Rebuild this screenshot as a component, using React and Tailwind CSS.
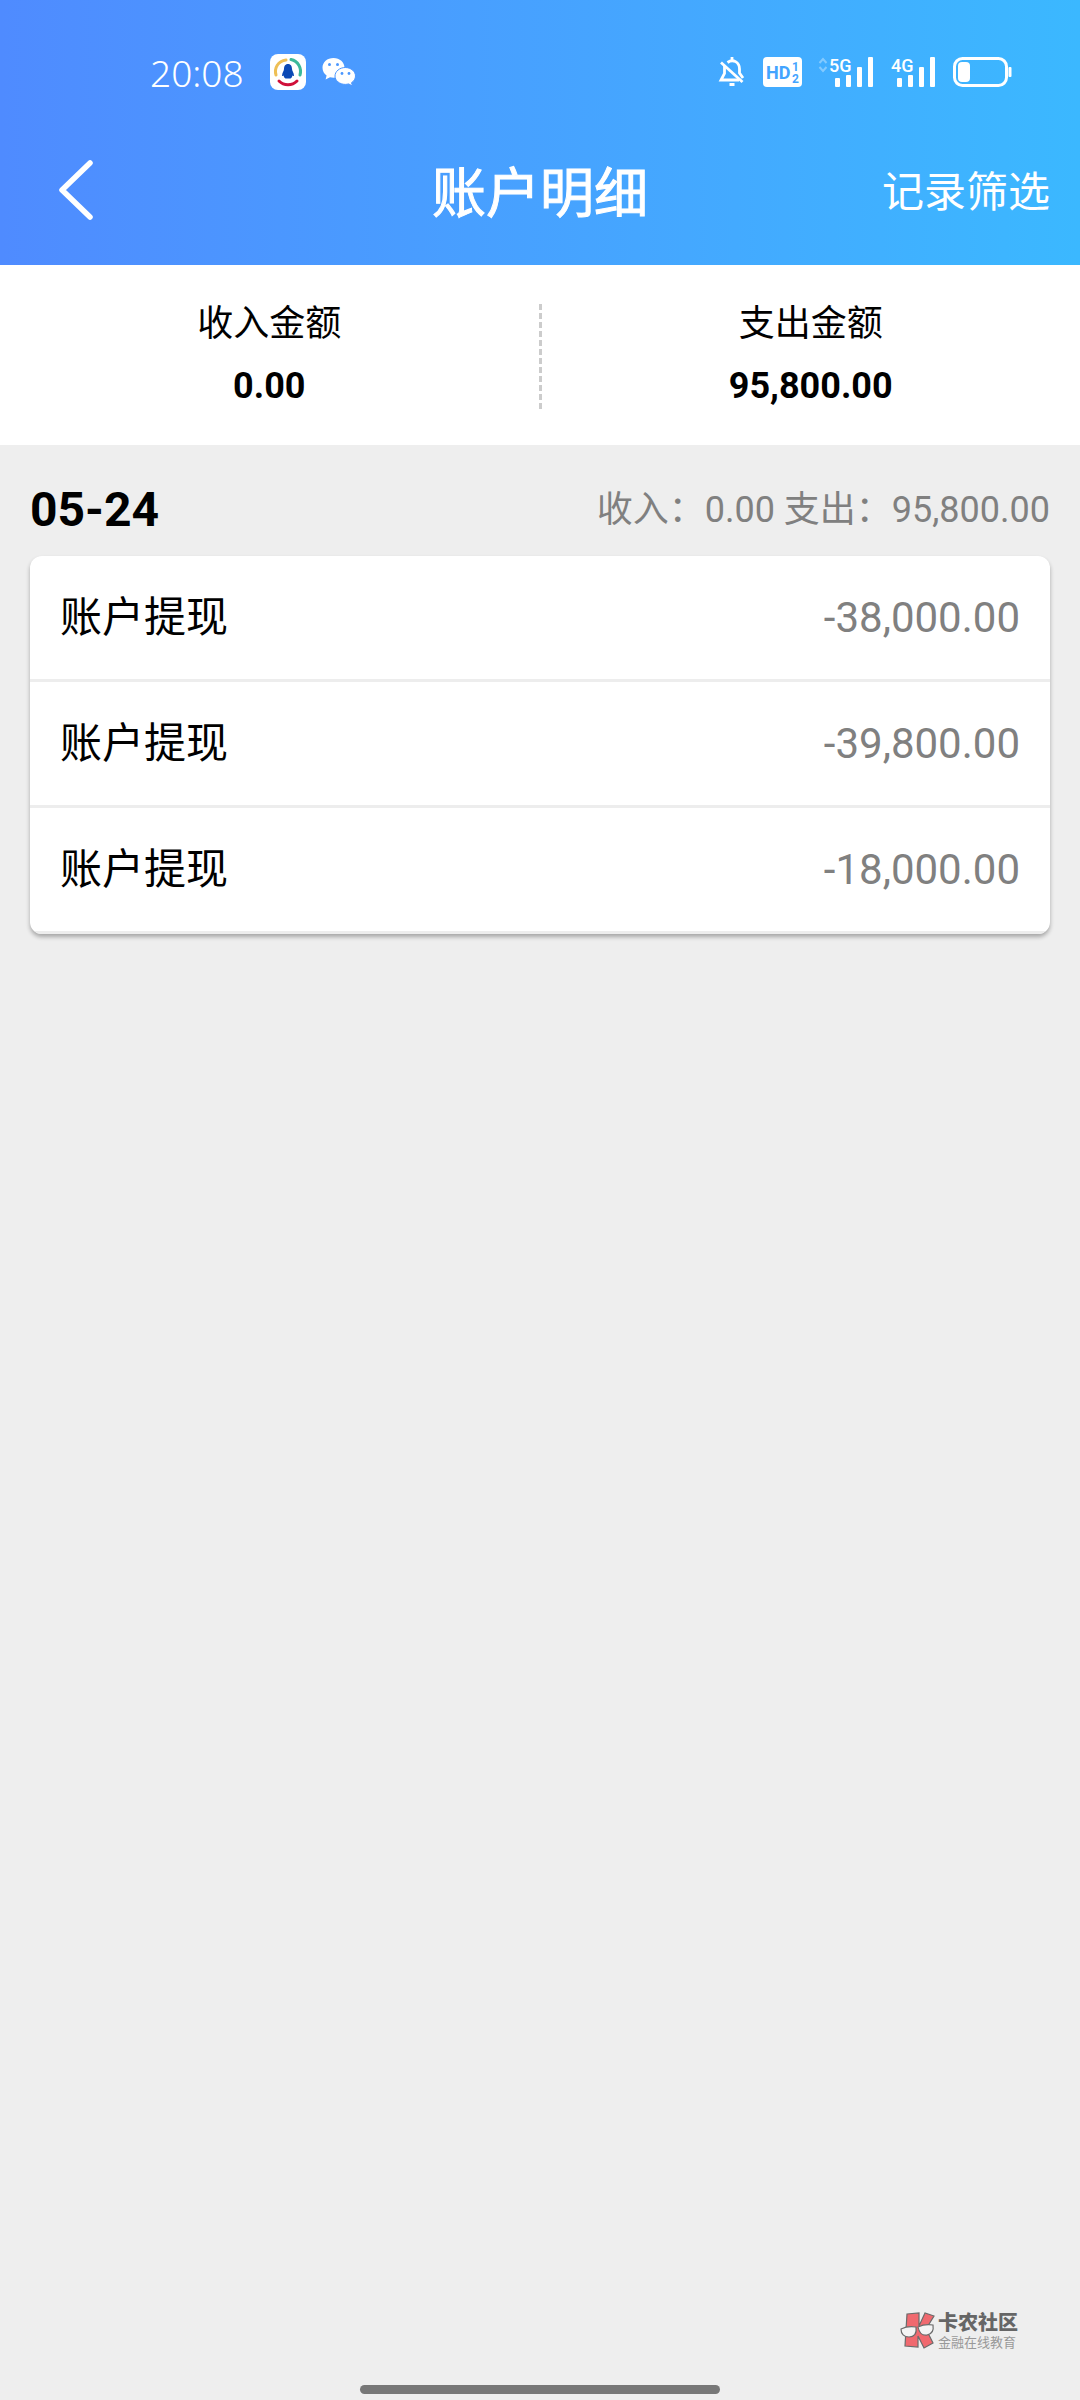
import React from "react";

/**DATA */
const summary = [
    { label: "收入金额", value: "0.00" },
    { label: "支出金额", value: "95,800.00" },
];

const records = [
    { id: 1, name: "账户提现", amount: "-38,000.00" },
    { id: 2, name: "账户提现", amount: "-39,800.00" },
    { id: 3, name: "账户提现", amount: "-18,000.00" },
];

/**STATUS BAR ICONS */
const QQMailIcon = () => (
    <svg width="36" height="36" viewBox="0 0 36 36">
        <rect width="36" height="36" rx="8" fill="#fff" />
        <g fill="none" strokeWidth="3" strokeLinecap="round">
            <path d="M6 21C4 14 8 7 16 6" stroke="#eebf55" />
            <path d="M21 5.500C28 7 32 14 30 21" stroke="#3cb99a" />
            <path d="M9 27C14 32 22 32 27 27" stroke="#d0103a" />
        </g>
        <path d="M18 10c-3 0-4 2.500-4 5 0 2-2 3.500-2 7 1 0 1.500-.5 1.500-.5.5 1.500 1 2.500 2 3h5c1-.5 1.500-1.500 2-3 0 0 .5.5 1.500.5 0-3.500-2-5-2-7 0-2.500-1-5-4-5z" fill="#0b49b5" />
    </svg>
);

const WeChatIcon = () => (
    <svg width="34" height="30" viewBox="0 0 34 30">
        <path fill="#fff" d="M11.500 1C5.200 1 .5 5.200.5 10.800c0 3.200 1.600 5.900 4.100 7.700L3.600 22.500l4.400-2.200c1.200.3 2.300.5 3.500.5 6.300 0 11-4.500 11-10S17.800 1 11.500 1z" />
        <path fill="#fff" stroke="#4b97ff" strokeWidth="1" d="M33.500 19c0-4.600-4.600-8.500-10.200-8.500S13 14.400 13 19s4.600 8.400 10.300 8.400c1.200 0 2.300-.2 3.300-.5l3.900 2.100-1-3.300c2.500-1.500 4-4 4-6.700z" />
        <g fill="#4b97ff">
            <circle cx="7.500" cy="7.500" r="1.500" />
            <circle cx="15.500" cy="7.500" r="1.500" />
            <circle cx="20" cy="16.500" r="1.400" />
            <circle cx="27" cy="16.500" r="1.400" />
        </g>
    </svg>
);

const MuteIcon = () => (
    <svg width="28" height="30" viewBox="0 0 28 30" fill="none" stroke="#fff" strokeWidth="2.800">
        <path d="M9.500 5.500C15 1.500 21.500 5 21.500 12v4l3.500 5" />
        <path d="M6.500 9v7.500L3 23h18" />
        <path d="M3 5.500l21.500 19.500" />
        <path d="M14 0v4" />
        <path d="M11.500 27.500h5" strokeWidth="3" />
    </svg>
);

const HDIcon = () => (
    <svg width="40" height="30" viewBox="0 0 40 30" fill="#43a4ff" fontFamily="Roboto, sans-serif" fontWeight="700">
        <rect width="39" height="30" rx="4" x="1" fill="#fff" />
        <text x="4" y="22" fontSize="18">HD</text>
        <text x="30" y="14" fontSize="12">1</text>
        <text x="30" y="26" fontSize="12">2</text>
    </svg>
);

const Signal = ({ label, arrows }) => (
    <svg width={arrows ? 56 : 46} height="40" viewBox={arrows ? "-10 -5 56 40" : "0 -5 46 40"} fill="#fff">
        {arrows && (
            <g fill="none" stroke="#fff" strokeOpacity="0.35" strokeWidth="2">
                <path d="M-8.500 6l3.500-4 3.500 4" />
                <path d="M-8.500 10l3.500 4 3.500-4" />
            </g>
        )}
        <text x="1" y="15" fontSize="18" fontFamily="Roboto, sans-serif" fontWeight="500">{label}</text>
        <rect x="7" y="21" width="5" height="9" rx="1" />
        <rect x="18" y="18" width="5" height="12" rx="1" />
        <rect x="29" y="10" width="5" height="20" rx="1" />
        <rect x="40" y="0" width="5" height="30" rx="1" />
    </svg>
);

const BatteryIcon = () => (
    <svg width="60" height="30" viewBox="0 0 60 30">
        <rect x="2.500" y="1.500" width="52" height="27" rx="8" fill="none" stroke="#fff" strokeWidth="3" />
        <rect x="6" y="5" width="12" height="20" rx="4" fill="#fff" />
        <rect x="56.500" y="10" width="3" height="10" rx="1" fill="#fff" />
    </svg>
);

const StatusBar = () => (
    <div className="flex h-36 items-center justify-between pl-[150px] pr-[68px] text-white">
        <div className="flex items-center">
            <span className="font-['Noto_Sans',sans-serif] text-[37px] font-light leading-none">20:08</span>
            <div className="ml-[26px] flex items-center gap-4">
                <QQMailIcon />
                <WeChatIcon />
            </div>
        </div>
        <div className="flex items-center gap-4">
            <MuteIcon />
            <HDIcon />
            <Signal label="5G" arrows />
            <Signal label="4G" />
            <BatteryIcon />
        </div>
    </div>
);

/**BRAND MARK AT THE BOTTOM */
const Brand = () => (
    <div className="flex items-center gap-0.5 self-end pr-[62px]">
        <svg width="36" height="38" viewBox="0 0 36 38" stroke="#6b6b6b" strokeWidth="1.200">
            <path d="M7 2l12-1v13l6-13 9 3-8 13 7 14-9 5-6-12v11L5 34z" fill="#f0696f" />
            <path d="M1 17c4-2 9-3 15-2 1 7-2 10-7 10s-8-3-8-8z" fill="#f4f4f4" />
            <path d="M18 15c4-2 9-3 15-2 1 6-1 9-6 10s-8-3-9-8z" fill="#f4f4f4" />
        </svg>
        <div className="flex flex-col">
            <span className="text-xl font-black leading-6 text-[#666]">卡农社区</span>
            <span className="text-[13px] leading-4 text-[#999]">金融在线教育</span>
        </div>
    </div>
);

const App = () => {
    return (
        <div className="flex min-h-screen flex-col bg-[#eee] font-[Roboto,'Noto_Sans_CJK_SC',sans-serif] text-black">
            <header className="bg-gradient-to-r from-[#4f8bff] to-[#3bb8ff]">
                <StatusBar />

                {/**NAVIGATION*/}
                <div className="grid h-[121px] grid-cols-3 items-start px-[30px] pt-4 text-white">
                    <button type="button" aria-label="返回" className="flex h-[60px] items-center pl-7">
                        <svg width="36" height="62" viewBox="0 0 36 62" fill="none" stroke="#fff" strokeWidth="5.500" strokeLinecap="round" strokeLinejoin="round">
                            <path d="M32 4L4 31l28 27" />
                        </svg>
                    </button>
                    <h1 className="text-center text-[54px] font-normal leading-[70px] [-webkit-text-stroke:1px_white]">账户明细</h1>
                    <button type="button" className="justify-self-end text-[42px] leading-[66px]">记录筛选</button>
                </div>
            </header>

            {/**SUMMARY*/}
            <section className="grid h-[180px] grid-cols-[1fr_3px_1fr] items-center bg-white">
                {summary.map((item, i) => (
                    <React.Fragment key={item.label}>
                        {i > 0 && (
                            <div className="h-[108px] bg-[repeating-linear-gradient(to_bottom,transparent_0px,transparent_3px,#ccc_3px,#ccc_9px)]" />
                        )}
                        <div className="flex flex-col items-center gap-2 text-4xl">
                            <span className="leading-[54px]">{item.label}</span>
                            <strong className="leading-[54px]">{item.value}</strong>
                        </div>
                    </React.Fragment>
                ))}
            </section>

            <main className="flex-1 px-[30px]">
                <div className="flex h-[111px] items-center justify-between pt-[18px]">
                    <h2 className="text-5xl font-bold">05-24</h2>
                    <p className="text-4xl text-[#808080]">收入：0.00 支出：95,800.00</p>
                </div>

                {/**RECORDS*/}
                <ul className="overflow-hidden rounded-xl bg-white shadow-[0_3px_4px_rgba(0,0,0,0.3)]">
                    {records.map((item) => (
                        <li key={item.id} className="flex h-[126px] items-center justify-between border-b-3 border-[#ededed] px-[30px] text-[42px]">
                            <span>{item.name}</span>
                            <span className="text-[#808080]">{item.amount}</span>
                        </li>
                    ))}
                </ul>
            </main>

            <footer className="flex flex-col items-center gap-[34px] pb-1.5">
                <Brand />
                <div className="h-[9px] w-1/3 rounded-full bg-[#777]" />
            </footer>
        </div>
    )
}

export default App;
